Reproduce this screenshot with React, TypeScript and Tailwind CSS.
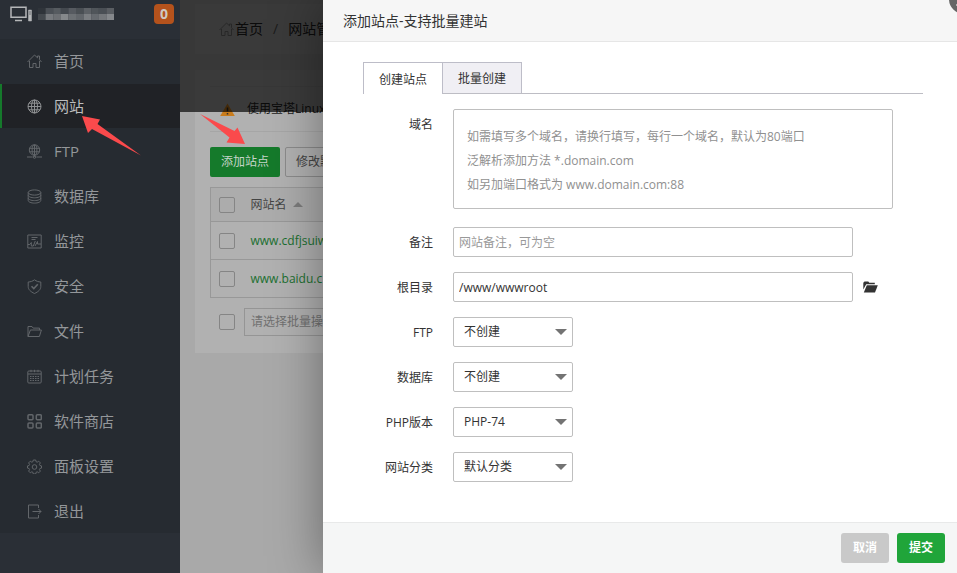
import type { ReactNode } from "react";

type IconName =
  | "home"
  | "globe"
  | "ftp"
  | "database"
  | "monitor"
  | "shield"
  | "folder"
  | "calendar"
  | "grid"
  | "gear"
  | "exit";

const ICONS: Record<IconName, ReactNode> = {
  home: <path d="M.5 8 7.5 1l3 2.8V2h2v3.7L14.500 8M2.500 7v6.500h3.500V9.500h3v4h3.500V7" />,
  globe: (
    <>
      <circle cx="7.5" cy="7.500" r="6.500" />
      <ellipse cx="7.5" cy="7.500" rx="3" ry="6.500" />
      <path d="M7.500 1v13M1 7.500h13M2 4.200h11M2 10.800h11" />
    </>
  ),
  ftp: (
    <>
      <circle cx="7.500" cy="6" r="5.200" />
      <ellipse cx="7.500" cy="6" rx="2.400" ry="5.200" />
      <path d="M7.500.8v12M2.500 4.300h10M2.500 7.800h10M0 13h5.500M9.500 13H15" />
      <circle cx="7.500" cy="13" r="1.300" />
    </>
  ),
  database: (
    <>
      <ellipse cx="7.500" cy="3.500" rx="6.300" ry="2.600" />
      <path d="M1.200 3.500v8c0 1.400 2.800 2.600 6.300 2.600s6.300-1.200 6.300-2.600v-8M1.200 6.200c0 1.400 2.800 2.600 6.300 2.600s6.300-1.200 6.300-2.600M1.200 9c0 1.400 2.800 2.600 6.300 2.600s6.300-1.200 6.300-2.600" />
    </>
  ),
  monitor: (
    <>
      <path d="M.8 1h13.400v13H.8zM4.500 3.500h6M4.500 5.500h4" />
      <path d="M.8 10.500h2l1.500-2M4.300 8.500v3.500h2l2-5M8 12l2.500-4.500v2.500h3.500" />
    </>
  ),
  shield: (
    <>
      <path d="M7.500.8c2 1.500 4 2.100 6.300 2.200v4.500c0 3-2.300 5.200-6.300 7-4-1.800-6.300-4-6.300-7V3c2.300-.1 4.300-.7 6.300-2.200z" />
      <path d="m4.500 7.200 2.300 2.400 4-4.300" strokeWidth="1.600" />
    </>
  ),
  folder: <path d="M1 12.500v-10h4l1.200 1.600h6.300v2M1 12.500 3.400 6h11l-2 6.500z" />,
  calendar: (
    <>
      <rect x=".8" y="2" width="13.400" height="12" rx="1" />
      <path d="M.8 5h13.400M4 .8v2.400M7.500.8v2.400M11 .8v2.400" />
      <path d="M3 7.500h9M3 9.500h9M3 11.500h9" strokeDasharray="1.500 1" />
    </>
  ),
  grid: (
    <g strokeWidth="1.500">
      <rect x="1" y=".8" width="5" height="5" rx="1" />
      <rect x="9.300" y=".8" width="5" height="5" rx="1" />
      <rect x="1" y="9" width="5" height="5" rx="1" />
      <rect x="9.300" y="9" width="5" height="5" rx="1" />
    </g>
  ),
  gear: (
    <>
      <path d="M6.300 1h2.400l.4 1.700 1.100.5 1.500-1 1.700 1.700-1 1.500.5 1.100 1.600.4v2.200l-1.600.4-.5 1.100 1 1.500-1.700 1.700-1.500-1-1.100.5-.4 1.700H6.300l-.4-1.700-1.100-.5-1.500 1-1.700-1.700 1-1.500-.5-1.100L.5 9.100V6.900l1.600-.4.5-1.100-1-1.500 1.700-1.700 1.500 1 1.100-.5z" />
      <circle cx="7.500" cy="8" r="2.300" />
    </>
  ),
  exit: <path d="M11.500 4V1H1.500v13h10v-3M5.500 7.500h8.500M11.500 5l2.500 2.500L11.500 10" />,
};

const MENU: { icon: IconName; label: string; active?: boolean }[] = [
  { icon: "home", label: "首页" },
  { icon: "globe", label: "网站", active: true },
  { icon: "ftp", label: "FTP" },
  { icon: "database", label: "数据库" },
  { icon: "monitor", label: "监控" },
  { icon: "shield", label: "安全" },
  { icon: "folder", label: "文件" },
  { icon: "calendar", label: "计划任务" },
  { icon: "grid", label: "软件商店" },
  { icon: "gear", label: "面板设置" },
  { icon: "exit", label: "退出" },
];

const SITES = ["www.cdfjsuiw", "www.baidu.c"];

const SELECTS = [
  { id: "ftp", label: "FTP", value: "不创建" },
  { id: "database", label: "数据库", value: "不创建" },
  { id: "php", label: "PHP版本", value: "PHP-74" },
  { id: "category", label: "网站分类", value: "默认分类" },
];

const PLACEHOLDER =
  "如需填写多个域名，请换行填写，每行一个域名，默认为80端口\n泛解析添加方法 *.domain.com\n如另加端口格式为 www.domain.com:88";

function Icon({ name, className = "" }: { name: IconName; className?: string }) {
  return (
    <svg viewBox="0 0 15 15" className={`size-[15px] shrink-0 fill-none stroke-current ${className}`}>
      {ICONS[name]}
    </svg>
  );
}

// blurred-out host name, one row of greys per line
const MOSAIC = [
  ["#2f343a", "#4b5056", "#565b60", "#44494f", "#565a60", "#4a4f54", "#5d6166", "#50555a", "#4a4f55", "#5a5e63"],
  ["#44494e", "#777a7e", "#6d7074", "#85888b", "#6c7074", "#62666b", "#7b7e82", "#666a6f", "#74777b", "#85888c"],
];

function Sidebar() {
  return (
    <aside className="w-[180px] shrink-0 bg-[#2a2f36]">
      <div className="flex h-[39px] items-start pt-1 pr-1.5 pl-2.5">
        <svg viewBox="0 0 22 16" className="mt-0.5 h-4 w-[22px] fill-none stroke-[#b5b7b9]">
          <path d="M1 1.200h15v10H1zM5 14.500h7" strokeWidth="1.500" />
          <path d="M18.500 4h3v11h-3z" className="fill-[#b5b7b9]" strokeWidth=".5" />
          <path d="M19.500 6h1M19.500 8h1" className="stroke-[#2a2f36]" />
        </svg>
        <svg viewBox="0 0 76 12" className="mt-1 ml-1.5 h-3 w-[76px]">
          {MOSAIC.map((row, y) =>
            row.map((fill, x) => (
              <rect key={`${x}-${y}`} x={x * 7.6} y={y * 6} width="7.700" height="6" fill={fill} />
            )),
          )}
        </svg>
        <span className="ml-auto flex size-5 items-center justify-center rounded bg-[#b4521c] text-sm font-bold text-[#cfc8c4]">
          0
        </span>
      </div>
      <nav className="bg-[#262b31]">
        {MENU.map((item) => (
          <a
            key={item.label}
            href="#"
            className={`mb-px flex h-11 items-center gap-3 border-l-2 pl-[25px] text-[15px] ${
              item.active
                ? "border-[#15792b] bg-[#202226] text-[#bcbdbe]"
                : "border-transparent text-[#94979a]"
            }`}
          >
            <Icon name={item.icon} className={item.active ? "text-[#8e9092]" : "text-[#62666a]"} />
            {item.label}
          </a>
        ))}
      </nav>
    </aside>
  );
}

function Checkbox({ label }: { label: string }) {
  return (
    <input
      type="checkbox"
      aria-label={label}
      className="block size-4 shrink-0 appearance-none rounded-xs border border-[#858585]"
    />
  );
}

function SiteList() {
  return (
    <main className="relative min-w-0 flex-1 bg-[#a9a9a9] pt-1 pl-[15px] text-xs whitespace-nowrap text-[#444]">
      <div className="flex h-[50px] items-center bg-[#b1b1b1] pl-6 text-sm text-[#222]">
        <Icon name="home" className="mr-px text-[#777]" />
        <a href="#">首页</a>
        <span className="mx-2.5 text-[#555]">/</span>
        <span>网站管</span>
      </div>

      <section className="mt-4 bg-[#b1b1b1] pt-4 pb-[17px] pl-[15px]">
        <div className="flex h-[46px] items-center gap-3 border-y border-[#a6a6a6] pl-2.5 text-[#222]">
          <svg viewBox="0 0 15 13" className="h-[13px] w-[15px]">
            <path d="M7.500.5 14.800 13H.2z" fill="#c97c1c" />
            <path d="M7.500 4.500v4M7.500 10v1.500" stroke="#333" strokeWidth="1.500" />
          </svg>
          使用宝塔Linux
        </div>

        <div className="mt-[15px] flex gap-[5px]">
          <button className="h-[30px] rounded-xs bg-[#157a2b] px-[11px] text-[#c5d5c9]">添加站点</button>
          <button className="h-[30px] rounded-xs border border-[#8b8b8b] px-2.5">修改默</button>
        </div>

        <table className="mt-2.5 w-full border-collapse border border-[#989898] text-left">
          <thead>
            <tr className="h-[34px] border-b border-[#989898] bg-[#acacac]">
              <th className="w-8 pl-2">
                <Checkbox label="全选" />
              </th>
              <th className="pl-2 font-normal">
                <span className="flex items-center gap-1.5">
                  网站名
                  <svg viewBox="0 0 10 5" className="h-[5px] w-2.5 fill-[#7c7c7c]">
                    <path d="M5 0l5 5H0z" />
                  </svg>
                </span>
              </th>
            </tr>
          </thead>
          <tbody>
            {SITES.map((site) => (
              <tr key={site} className="h-[38px] border-b border-[#989898]">
                <td className="w-8 pl-2">
                  <Checkbox label={site} />
                </td>
                <td className="pl-2">
                  <a href="#" className="text-[#1b6f30]">
                    {site}
                  </a>
                </td>
              </tr>
            ))}
          </tbody>
        </table>

        <div className="mt-2.5 flex items-center gap-[9px] pl-[9px]">
          <Checkbox label="批量选择" />
          <select
            aria-label="批量操作"
            className="h-7 w-40 appearance-none border border-[#959595] px-1.5 text-[#707070]"
          >
            <option>请选择批量操</option>
          </select>
        </div>
      </section>

      <div className="absolute inset-x-0 top-0 h-28 bg-black/67" />
    </main>
  );
}

function Row({ id, label, children }: { id: string; label: string; children: ReactNode }) {
  return (
    <div className="flex items-start gap-5">
      <label htmlFor={id} className="h-[30px] w-[70px] shrink-0 pt-0.5 text-right leading-7">
        {label}
      </label>
      {children}
    </div>
  );
}

function AddSiteDialog() {
  return (
    <div
      role="dialog"
      aria-labelledby="dialog-title"
      className="absolute inset-y-0 right-0 left-[323px] flex flex-col bg-white text-xs text-[#333] shadow-[1px_1px_50px_rgba(0,0,0,0.4)]"
    >
      <h1 id="dialog-title" className="h-[42px] border-b border-[#e6e6e6] bg-[#f6f6f6] px-5 text-sm leading-[42px]">
        添加站点-支持批量建站
      </h1>
      <button
        aria-label="关闭"
        className="absolute -top-4 -right-[22px] flex size-[30px] items-center justify-center rounded-full bg-[#666]"
      >
        <svg viewBox="0 0 16 16" className="size-4 stroke-white" strokeWidth="3">
          <path d="M1 1l14 14M15 1 1 15" />
        </svg>
      </button>

      <div className="flex-1 pt-5 pr-[34px] pl-10">
        <div className="flex h-8 border-b border-[#bdbdc4]">
          <button className="-mb-px border border-b-0 border-[#bdbdc8] bg-white px-[15px] pt-0.5">创建站点</button>
          <button className="border border-b-0 border-l-0 border-[#bdbdc8] bg-[#f0eff4] px-[15px] pt-0.5">
            批量创建
          </button>
        </div>

        <form className="mt-[15px] flex flex-col gap-[15px]">
          <Row id="domain" label="域名">
            <textarea
              id="domain"
              placeholder={PLACEHOLDER}
              className="mb-[3px] block h-[100px] w-full max-w-[440px] resize-none rounded-xs border border-[#bfbfbf] px-[13px] py-[15px] leading-6 placeholder:text-[#909090]"
            />
          </Row>
          <Row id="remark" label="备注">
            <input
              id="remark"
              placeholder="网站备注，可为空"
              className="h-[30px] w-full max-w-[400px] rounded-xs border border-[#bfbfbf] px-[5px] placeholder:text-[#999]"
            />
          </Row>
          <Row id="root-dir" label="根目录">
            <div className="flex w-full items-center gap-2.5">
              <input
                id="root-dir"
                defaultValue="/www/wwwroot"
                className="h-[30px] w-full max-w-[400px] rounded-xs border border-[#bfbfbf] px-[5px]"
              />
              <button type="button" aria-label="选择目录">
                <svg viewBox="0 0 15 12" className="h-3 w-[15px] fill-[#333]">
                  <path d="M.3 8.500V1.800L1.500.5h3.800l1 1.200h5.500v1.500H3.200z" />
                  <path d="M3.800 4.200h11L12 11.500H.8z" />
                </svg>
              </button>
            </div>
          </Row>
          {SELECTS.map((field) => (
            <Row key={field.id} id={field.id} label={field.label}>
              <div className="relative">
                <select
                  id={field.id}
                  className="block h-[30px] w-[120px] appearance-none rounded-xs border border-[#bfbfbf] bg-white px-2.5"
                >
                  <option>{field.value}</option>
                </select>
                <svg
                  viewBox="0 0 12 6"
                  className="pointer-events-none absolute top-3 right-1.5 h-1.5 w-3 fill-[#737373]"
                >
                  <path d="M0 0h12L6 6z" />
                </svg>
              </div>
            </Row>
          ))}
        </form>
      </div>

      <div className="flex justify-end gap-2 border-t border-[#e8e9e9] bg-[#f5f6f6] px-3 py-2.5 font-bold text-white">
        <button className="h-[30px] rounded-[3px] bg-[#c9c9c9] px-3">取消</button>
        <button className="h-[30px] rounded-[3px] bg-[#20a53a] px-3">提交</button>
      </div>
    </div>
  );
}

export default function App() {
  return (
    <div className="relative flex min-h-screen overflow-hidden font-['Open_Sans','Noto_Sans_CJK_SC',sans-serif]">
      <Sidebar />
      <SiteList />
      <AddSiteDialog />
      <svg viewBox="0 0 250 160" className="pointer-events-none absolute top-0 left-0 h-40 w-[250px] fill-[#fa4a4c]">
        <path d="M82 116l18 3.500-2.500 4.500 43.500 31.500L92 129l-4 4z" />
        <path d="M200 114l34.500 17 3-3.500L245 144l-18.500-1.500 3-5z" />
      </svg>
    </div>
  );
}
